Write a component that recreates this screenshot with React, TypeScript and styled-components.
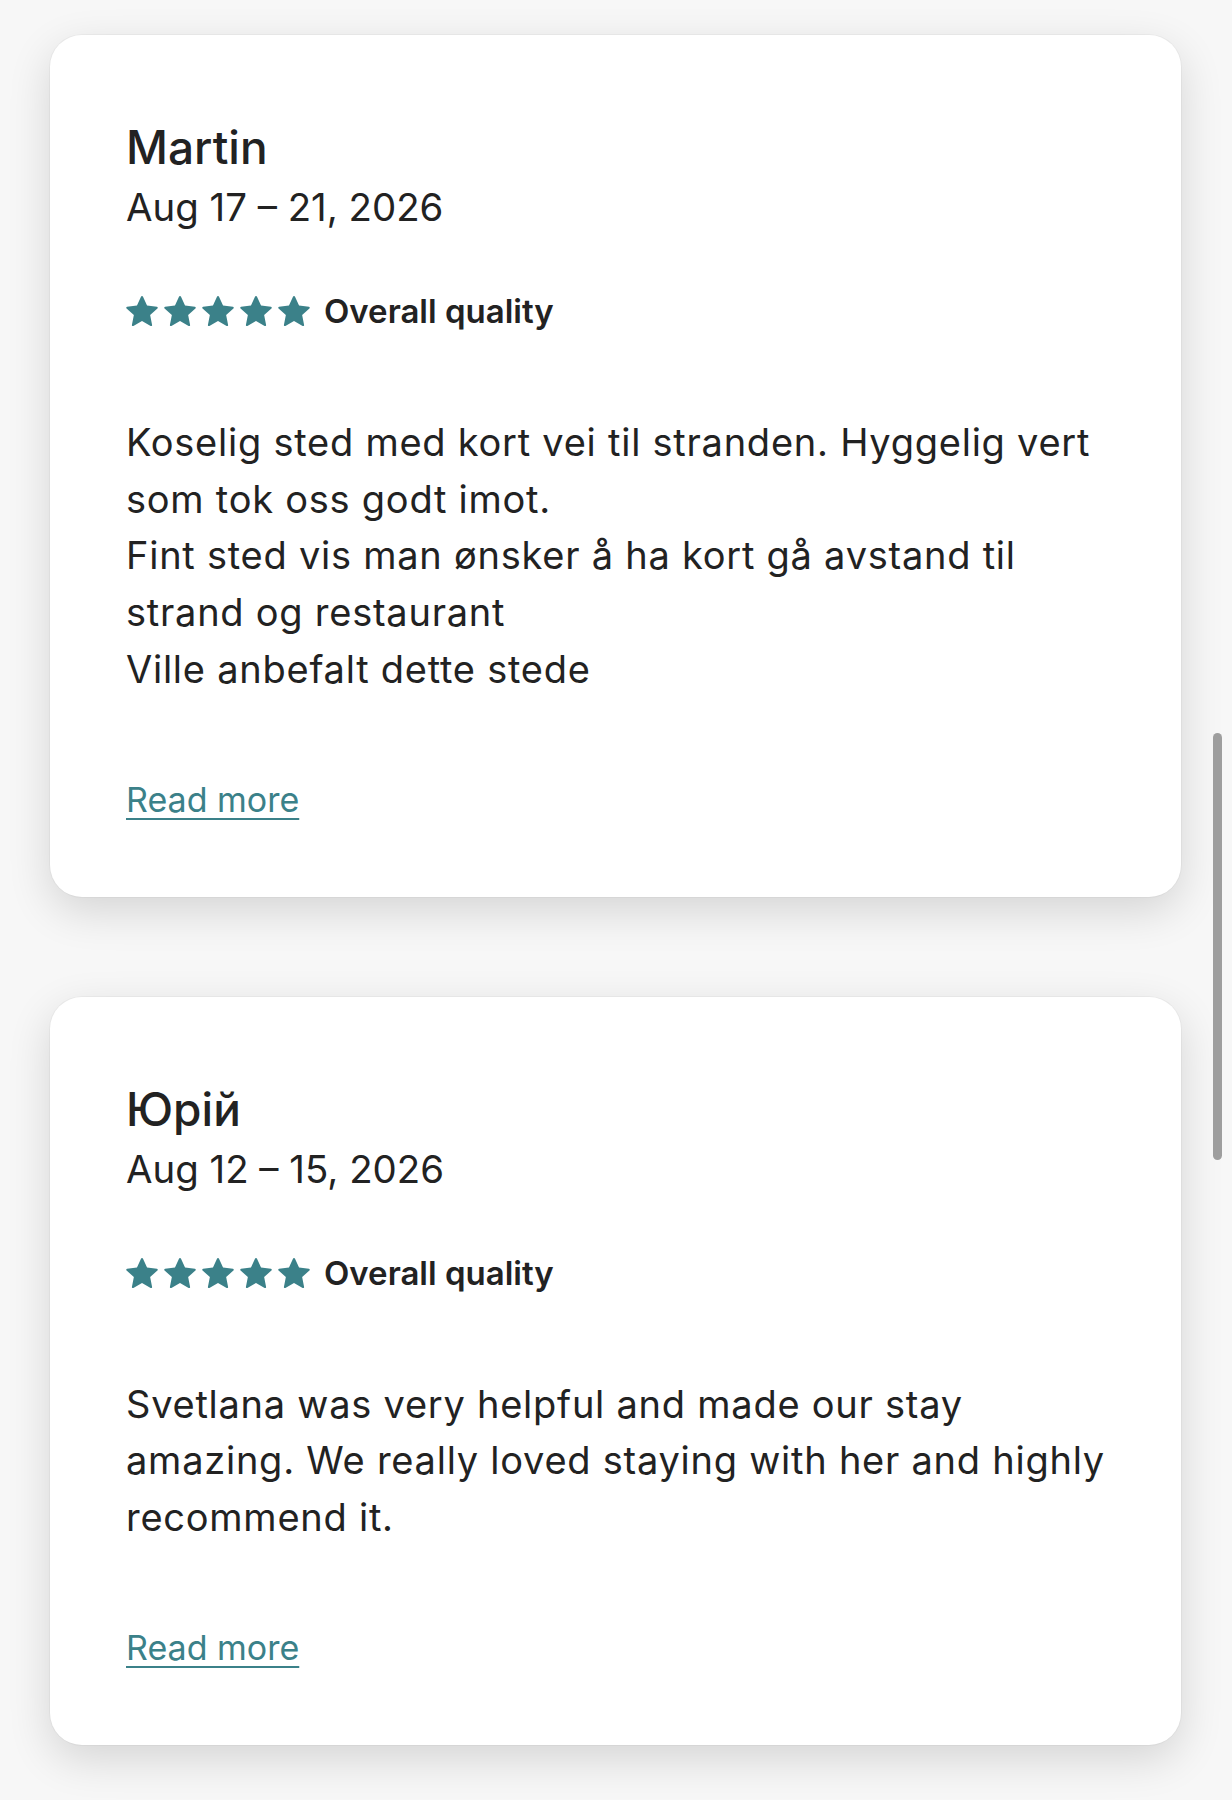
import styled, { createGlobalStyle } from 'styled-components';

interface Review {
  name: string,
  dates: string,
  lines: string[]
};

const reviews: Review[] = [
  {
    name: 'Martin',
    dates: 'Aug 17 – 21, 2026',
    lines: [
      'Koselig sted med kort vei til stranden. Hyggelig vert som tok oss godt imot.',
      'Fint sted vis man ønsker å ha kort gå avstand til strand og restaurant',
      'Ville anbefalt dette stede'
    ]
  },
  {
    name: 'Юрій',
    dates: 'Aug 12 – 15, 2026',
    lines: [
      'Svetlana was very helpful and made our stay amazing. We really loved staying with her and highly recommend it.'
    ]
  }
];

const GlobalStyle = createGlobalStyle`
  body {
    margin: 0;
    background: #f7f7f7;
    font-family: Inter, "Noto Sans", sans-serif;
    color: #222222;
  }
`;

const StyledPage = styled.div`
  min-height: 1800px;
  box-sizing: border-box;
  padding: 35px 51px 0 50px;
  display: flex;
  flex-direction: column;
  gap: 100px;
`;

const StyledCard = styled.div`
  background: #ffffff;
  border-radius: 32px;
  padding: 86px 62px 79px 76px;
  box-shadow: 0 0 0 1px rgba(0, 0, 0, 0.03), 0 14px 44px rgba(0, 0, 0, 0.14);
  display: flex;
  flex-direction: column;
  align-items: flex-start;
`;

const StyledName = styled.div`
  font-size: 46px;
  line-height: 52px;
  font-weight: 500;
`;

const StyledDates = styled.div`
  margin-top: 10px;
  font-size: 38.4px;
  line-height: 48px;
`;

const StyledRating = styled.div`
  margin-top: 60px;
  display: flex;
  align-items: center;
  gap: 14px;
`;

const StyledStars = styled.div`
  display: flex;
  gap: 6px;
  color: #3b8189;
`;

const StyledLabel = styled.span`
  font-size: 33px;
  line-height: 40px;
  font-weight: 600;
`;

const StyledBody = styled.div`
  margin-top: 83px;
  font-size: 38px;
  line-height: 56.7px;
  letter-spacing: 0.75px;
`;

const StyledReadMore = styled.a`
  margin-top: 84px;
  font-size: 34px;
  line-height: 36px;
  color: #3b8189;
  text-decoration: underline;
  text-underline-offset: 6px;
  text-decoration-thickness: 2px;
  cursor: pointer;
`;

const StyledScrollbar = styled.div`
  position: fixed;
  top: 733px;
  right: 10px;
  width: 9px;
  height: 427px;
  border-radius: 5px;
  background: #9e9e9e;
`;

function Star() {
  return (
    <svg width="32" height="32" viewBox="0 0 32 32" fill="currentColor" aria-hidden="true">
      <path d="M15.094 1.579l-4.124 8.885-9.86 1.27a1 1 0 0 0-.542 1.736l7.293 6.565-1.965 9.852a1 1 0 0 0 1.483 1.061L16 25.951l8.625 4.997a1 1 0 0 0 1.482-1.06l-1.965-9.853 7.293-6.565a1 1 0 0 0-.541-1.735l-9.86-1.271-4.127-8.885a1 1 0 0 0-1.814 0z" />
    </svg>
  );
}

function ReviewCard({ review }: { review: Review }) {
  return (
    <StyledCard>
      <StyledName>{review.name}</StyledName>
      <StyledDates>{review.dates}</StyledDates>
      <StyledRating>
        <StyledStars>
          {[0, 1, 2, 3, 4].map(i => <Star key={i} />)}
        </StyledStars>
        <StyledLabel>Overall quality</StyledLabel>
      </StyledRating>
      <StyledBody>
        {review.lines.map((line, i) => <div key={i}>{line}</div>)}
      </StyledBody>
      <StyledReadMore>Read more</StyledReadMore>
    </StyledCard>
  );
}

export default function App() {
  return (
    <>
      <GlobalStyle />
      <StyledPage>
        {reviews.map(r => <ReviewCard key={r.name} review={r} />)}
      </StyledPage>
      <StyledScrollbar />
    </>
  );
}
